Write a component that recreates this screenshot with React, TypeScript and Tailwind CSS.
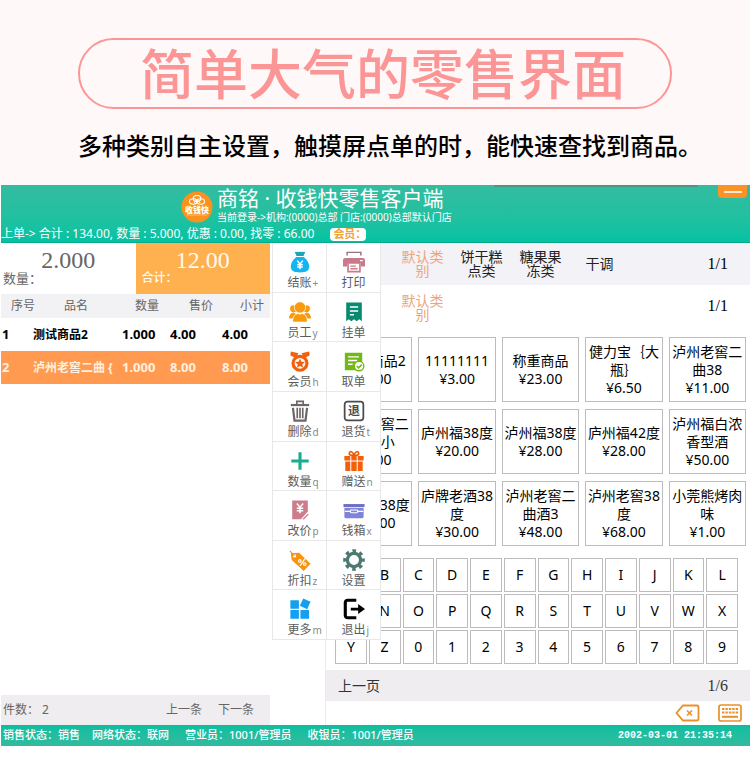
import type { ReactNode } from "react";

const actions: { label: string; hint?: string; icon: ReactNode }[] = [
  {
    label: "结账",
    hint: "+",
    icon: (
      <>
        <path d="M6 0.500q1.700 1.300 3 0q1.500 1.300 3 0q1.500 1.300 3 0q1.300 1.300 3 0L15.800 5.500H8.200z" fill="#19a6b8" />
        <path d="M8 6.500h8c4 3 6 6.500 6 10.500 0 4.500-3 6.500-10 6.500S2 21.500 2 17C2 13 4 9.500 8 6.500z" fill="#12b5f2" />
        <path d="M9 10.500l3 4 3-4M12 14.500V20M9 15h6M9 17.500h6" stroke="#fff" strokeWidth="1.600" fill="none" />
      </>
    ),
  },
  {
    label: "打印",
    icon: (
      <>
        <path d="M4.500 5V1.500h15V5" stroke="#97747f" strokeWidth="1.600" fill="none" />
        <path d="M2.500 7.500h19A2.500 2.500 0 0 1 24 10v7h-4.500v-4h-15v4H0v-7a2.500 2.500 0 0 1 2.500-2.500z" fill="#c9798a" />
        <path d="M5.500 13h13v9.500h-13z" fill="#fff" stroke="#c9798a" strokeWidth="1.800" />
        <path d="M8 16.500h6M8 19.300h8" stroke="#c9798a" strokeWidth="1.500" />
        <path d="M18.500 10.500h3" stroke="#fff" strokeWidth="1.400" />
      </>
    ),
  },
  {
    label: "员工",
    hint: "y",
    icon: (
      <g fill="#f99a0c">
        <circle cx="5" cy="8.500" r="3.800" />
        <circle cx="19" cy="8.500" r="3.800" />
        <path d="M0 19c0-4 2-6 5-6.500l3 2V19zM24 19c0-4-2-6-5-6.500l-3 2V19z" />
        <circle cx="12" cy="7" r="6.200" stroke="#fff" strokeWidth="0.800" />
        <path d="M4 23c0-6 2-8.500 6-9.500l2 1 2-1c4 1 6 3.500 6 9.500z" stroke="#fff" strokeWidth="0.800" />
      </g>
    ),
  },
  {
    label: "挂单",
    icon: (
      <>
        <path d="M3.500 1.500h17v20.500l-2.800-2-2.800 2-2.900-2-2.900 2-2.800-2-2.800 2z" fill="#078a70" />
        <path d="M7.500 6.500h9M7.500 10.800h9M7.500 15h4.500" stroke="#fff" strokeWidth="1.600" />
      </>
    ),
  },
  {
    label: "会员",
    hint: "h",
    icon: (
      <>
        <path d="M2 1.500l8.500 2L7 8.500 1.500 6zM22 1.500l-8.500 2L17 8.500 22.500 6z" fill="#f2600c" />
        <circle cx="12" cy="14.500" r="7.600" fill="#fff" stroke="#f2600c" strokeWidth="3.400" />
        <path d="M12 9.300l1.600 3.500 3.800.4-2.900 2.500.9 3.700-3.400-1.900-3.400 1.900.9-3.700-2.900-2.500 3.800-.4z" fill="#f2600c" />
      </>
    ),
  },
  {
    label: "取单",
    icon: (
      <>
        <path d="M2 3h19v12h-5v7H2z" fill="#74b816" />
        <path d="M5.500 7.500h12M5.500 11.500h10M5.500 15.500h5" stroke="#fff" strokeWidth="1.500" />
        <circle cx="17.500" cy="17.500" r="5.200" fill="#fff" stroke="#74b816" strokeWidth="1.500" />
        <path d="M15 17.500l2 2 3.500-3.500" stroke="#74b816" strokeWidth="1.700" fill="none" />
      </>
    ),
  },
  {
    label: "删除",
    hint: "d",
    icon: (
      <g fill="none" stroke="#6b6468">
        <path d="M2 5.500h20" strokeWidth="2.400" />
        <path d="M8.500 4.500V1.500h7v3" strokeWidth="1.800" />
        <path d="M4.300 8.500L6 22.500h12l1.700-14" strokeWidth="2.400" />
        <path d="M9 8.500V20M12 8.500V20M15 8.500V20" strokeWidth="1.800" />
      </g>
    ),
  },
  {
    label: "退货",
    hint: "t",
    icon: (
      <>
        <rect x="1.800" y="1.800" width="20.400" height="20.400" rx="3" fill="none" stroke="#4d4a4d" strokeWidth="1.900" />
        <text x="12" y="16.500" textAnchor="middle" fontSize="13" fontWeight="700" fill="#4d4a4d">
          退
        </text>
      </>
    ),
  },
  {
    label: "数量",
    hint: "q",
    icon: <path d="M12 2.500v19M2.500 12h19" stroke="#18ad91" strokeWidth="3.400" />,
  },
  {
    label: "赠送",
    hint: "n",
    icon: (
      <>
        <path d="M12 6C9 6 6 5.500 7 3s4-1 5 3c1-4 4-5.500 5-3s-2 3-5 3z" fill="none" stroke="#e8590c" strokeWidth="1.700" />
        <path d="M1.500 6.500h21v5h-21zM2.500 12.500h19V23h-19z" fill="#f2600c" />
        <path d="M8.500 6.500V23M15.500 6.500V23" stroke="#fff" strokeWidth="1.100" />
      </>
    ),
  },
  {
    label: "改价",
    hint: "p",
    icon: (
      <>
        <path d="M3.500 1.500h17v12L13 22H3.500z" fill="#cd7c8c" />
        <path d="M8.500 5l3.500 4 3.500-4M12 9v6.500M8.500 10h7M8.500 12.800h7" stroke="#fff" strokeWidth="1.600" fill="none" />
        <path d="M21 16.500L15.500 22" stroke="#cd7c8c" strokeWidth="1.500" />
      </>
    ),
  },
  {
    label: "钱箱",
    hint: "x",
    icon: (
      <>
        <path d="M0.500 5.500h23v3.200h-23z" fill="#6d70c4" />
        <path d="M1.500 9.500h21V19a2 2 0 0 1-2 2h-17a2 2 0 0 1-2-2z" fill="#8084d6" />
        <path d="M2 13.500h6M16 13.500h6" stroke="#fff" strokeWidth="1.200" />
        <rect x="8" y="12" width="8" height="3" rx="1" fill="none" stroke="#fff" strokeWidth="1.200" />
      </>
    ),
  },
  {
    label: "折扣",
    hint: "z",
    icon: (
      <>
        <path d="M2 4.500L11 4l12.500 12-7.500 8L3 12z" fill="#f9920c" />
        <circle cx="6" cy="7.500" r="1.800" fill="#fff" />
        <path d="M6 7.500L1 2" stroke="#f9920c" strokeWidth="1.100" />
        <path d="M12 18.500l5.500-8" stroke="#fff" strokeWidth="1.300" />
        <circle cx="11.800" cy="13" r="1.400" fill="none" stroke="#fff" strokeWidth="1.200" />
        <circle cx="17.200" cy="16.500" r="1.400" fill="none" stroke="#fff" strokeWidth="1.200" />
      </>
    ),
  },
  {
    label: "设置",
    icon: (
      <g stroke="#4a7a72" fill="none">
        <circle cx="12" cy="12" r="7.200" strokeWidth="3.600" />
        <circle cx="12" cy="12" r="10" strokeWidth="3.600" strokeDasharray="3.930 3.924" strokeDashoffset="2" />
      </g>
    ),
  },
  {
    label: "更多",
    hint: "m",
    icon: (
      <g fill="#159ff0">
        <path d="M1.500 2.500h9.300v9.300H1.500zM1.500 13.200h9.300v9.300H1.500zM12.500 13.200h9.300v9.300h-9.300z" />
        <path d="M15.500 0.500l8 3.700-3.700 8-8-3.700z" />
      </g>
    ),
  },
  {
    label: "退出",
    hint: "j",
    icon: (
      <>
        <path d="M14.500 2.500H5A2.500 2.500 0 0 0 2.500 5v14A2.500 2.500 0 0 0 5 21.500h9.500" fill="none" stroke="#000" strokeWidth="3.400" />
        <path d="M8.500 10.500h8V6.500L24 12l-7.500 5.500v-4h-8z" fill="#000" />
      </>
    ),
  },
];

const products = [
  { name: "测试商品2", price: "¥4.00" },
  { name: "11111111", price: "¥3.00" },
  { name: "称重商品", price: "¥23.00" },
  { name: "健力宝｛大瓶｝", price: "¥6.50" },
  { name: "泸州老窖二曲38", price: "¥11.00" },
  { name: "泸州老窖二曲酒小", price: "¥8.00" },
  { name: "庐州福38度", price: "¥20.00" },
  { name: "泸州福38度", price: "¥28.00" },
  { name: "庐州福42度", price: "¥28.00" },
  { name: "泸州福白浓香型酒", price: "¥50.00" },
  { name: "泸州福38度", price: "¥20.00" },
  { name: "庐牌老酒38度", price: "¥30.00" },
  { name: "泸州老窖二曲酒3", price: "¥48.00" },
  { name: "泸州老窖38度", price: "¥68.00" },
  { name: "小莞熊烤肉味", price: "¥1.00" },
];

const rows = [
  { no: 1, name: "测试商品2", qty: "1.000", price: "4.00", total: "4.00" },
  { no: 2, name: "泸州老窖二曲 {", qty: "1.000", price: "8.00", total: "8.00" },
];

const categories = ["默认类别", "饼干糕点类", "糖果果冻类", "干调"];
const keys = "ABCDEFGHIJKLMNOPQRSTUVWXYZ0123456789".split("");

function Banner() {
  return (
    <section className="bg-[#fff8f8] px-[78px] pt-[38px] pb-[23px] text-center">
      <h1 className="flex h-[71px] items-center justify-center rounded-full border-2 border-[#fc9696] pl-4 text-[54px] leading-none font-medium whitespace-nowrap text-[#fc9696]">
        简单大气的零售界面
      </h1>
      <p className="mt-[21px] text-left text-2xl font-medium whitespace-nowrap text-black">
        多种类别自主设置，触摸屏点单的时，能快速查找到商品。
      </p>
    </section>
  );
}

function Logo() {
  return (
    <svg viewBox="0 0 32 32" className="size-8 shrink-0">
      <circle cx="16" cy="16" r="15.500" fill="#fb9220" />
      <g fill="none" stroke="#fff" strokeWidth="1.100">
        <ellipse cx="16" cy="7.500" rx="3.800" ry="3" />
        <ellipse cx="12.300" cy="10.500" rx="3.800" ry="2.700" />
        <ellipse cx="19.700" cy="10.500" rx="3.800" ry="2.700" />
        <path d="M13 12l3-3.500 3 3.500" />
      </g>
      <text x="16" y="21.500" textAnchor="middle" fontSize="8" fontWeight="900" fill="#fff">
        收钱快
      </text>
      <path d="M6 24h20" stroke="#fdc98c" strokeWidth="0.800" />
    </svg>
  );
}

function Header() {
  return (
    <header className="flex h-[58px] flex-col justify-between border-b border-[#0aa98c] bg-linear-to-b from-[#33bca0] to-[#00c3a2] text-white">
      <div className="flex items-start justify-between pr-[3px] pl-[180px]">
        <div className="flex gap-1">
          <div className="pt-1.5">
            <Logo />
          </div>
          <div className="whitespace-nowrap">
            <h2 className="text-[21px] leading-[26px]">商铭 · 收钱快零售客户端</h2>
            <p className="text-[10px] leading-3">当前登录-&gt;机构:(0000)总部 门店:(0000)总部默认门店</p>
          </div>
        </div>
        <div className="flex items-start gap-5">
          <div className="h-0.5 w-[204px] bg-[#4f9482]" />
          <button aria-label="最小化" className="flex h-[13px] w-[29px] items-center justify-center rounded-b bg-[#fb9228]">
            <span className="h-0.5 w-[18px] bg-[#ffe9cf]" />
          </button>
        </div>
      </div>
      <div className="flex h-4 items-center gap-4 text-xs leading-4 whitespace-nowrap">
        <p>上单-&gt; 合计 : 134.00, 数量 : 5.000, 优惠 : 0.00, 找零 : 66.00</p>
        <span className="flex h-[13px] w-9 items-center overflow-hidden rounded-sm bg-white pl-[3px] text-[11px] font-bold text-[#f0a33c]">
          会员：
        </span>
      </div>
    </header>
  );
}

function Cart() {
  return (
    <section className="flex w-[269px] shrink-0 flex-col bg-white">
      <div className="grid h-[51px] grid-cols-2">
        <div className="text-[#666]">
          <p className="pt-1 text-center font-[Liberation_Serif,serif] text-2xl leading-[26px]">2.000</p>
          <p className="pl-0.5 text-[13px] leading-[10px]">数量：</p>
        </div>
        <div className="bg-[#ffb04f] text-[#fffaf0]">
          <p className="pt-1 text-center font-[Liberation_Serif,serif] text-2xl leading-[26px]">12.00</p>
          <p className="pl-1.5 text-xs leading-[10px] font-medium">合计：</p>
        </div>
      </div>
      <table className="w-full table-fixed text-left whitespace-nowrap">
        <colgroup>
          <col className="w-8" />
          <col className="w-[89px]" />
          <col className="w-12" />
          <col className="w-[52px]" />
          <col />
        </colgroup>
        <thead>
          <tr className="h-6 bg-[#f2f2f5] text-xs text-[#666]">
            <th className="pl-2.5 font-normal">序号</th>
            <th className="pl-[31px] font-normal">品名</th>
            <th className="pl-[13px] font-normal">数量</th>
            <th className="pl-[19px] font-normal">售价</th>
            <th className="pl-[18px] font-normal">小计</th>
          </tr>
        </thead>
        <tbody>
          {rows.map((row) => (
            <tr
              key={row.no}
              className="h-[33px] text-[13px] font-bold text-black even:bg-[#ff9a50] even:text-[#fff0df]"
            >
              <td className="pl-px">{row.no}</td>
              <td className="text-xs">{row.name}</td>
              <td>{row.qty}</td>
              <td>{row.price}</td>
              <td>{row.total}</td>
            </tr>
          ))}
        </tbody>
      </table>
      <div className="mt-auto flex h-[30px] items-center bg-[#efedf0] pr-4 pl-0.5 text-xs text-[#666]">
        <span className="mr-auto">件数： 2</span>
        <button className="mr-4">上一条</button>
        <button>下一条</button>
      </div>
    </section>
  );
}

function ActionMenu() {
  return (
    <nav className="absolute top-0 left-0.5 grid h-[397px] w-[109px] grid-cols-2 grid-rows-8 border-l border-[#e8e8e8] bg-white">
      {actions.map((action) => (
        <button key={action.label} className="flex flex-col items-center border-r border-b border-[#e8e8e8] pt-2">
          <svg viewBox="0 0 24 24" className="size-[22px] shrink-0">
            {action.icon}
          </svg>
          <span className="mt-0.5 flex items-baseline pl-2 text-xs leading-4 text-[#5c5c5c]">
            {action.label}
            <span className="w-2 pl-px text-left text-[10px] text-[#888]">{action.hint}</span>
          </span>
        </button>
      ))}
    </nav>
  );
}

function Catalog() {
  return (
    <section className="flex min-w-0 flex-1 flex-col bg-white text-black">
      <div className="flex h-[42px] items-center bg-[#f3f2f6] pr-[22px] pl-[67px] text-sm leading-[14px]">
        {categories.map((category) => (
          <button key={category} className="w-[59px] px-2 text-[#222] first:text-[#eda47e]">
            {category}
          </button>
        ))}
        <span className="ml-auto font-[Liberation_Serif,serif] text-base">1/1</span>
      </div>
      <div className="flex h-[52px] items-start pt-[9px] pr-[22px] pl-[67px] text-sm leading-[14px]">
        <button className="w-[59px] px-2 text-[#eda47e]">默认类别</button>
        <span className="ml-auto font-[Liberation_Serif,serif] text-base">1/1</span>
      </div>
      <div className="grid grid-cols-5 gap-x-1.5 gap-y-[7px] pr-1 pl-[9px]">
        {products.map((product, i) => (
          <button
            key={i}
            className="flex h-[65px] flex-col items-center justify-center border border-[#bdbbbd] text-sm leading-[18px]"
          >
            <span>{product.name}</span>
            <span>{product.price}</span>
          </button>
        ))}
      </div>
      <div className="mt-3 grid grid-cols-12 gap-0.5 pr-3 pl-[9px]">
        {keys.map((key) => (
          <button key={key} className="h-[34px] border border-[#bdbbbd] text-sm">
            {key}
          </button>
        ))}
      </div>
      <div className="mt-1.5 flex h-[31px] items-center justify-between bg-[#efedf0] pr-[22px] pl-3 text-sm text-[#333]">
        <button>上一页</button>
        <span className="font-[Liberation_Serif,serif] text-base">1/6</span>
      </div>
      <div className="flex h-6 items-center justify-end gap-[18px] pr-2">
        <button aria-label="退格">
          <svg viewBox="0 0 25 18" className="h-[18px] w-[25px]" fill="none" stroke="#e8912a">
            <path d="M8 1.500h14a1.500 1.500 0 0 1 1.500 1.500v12a1.500 1.500 0 0 1-1.500 1.500H8L1.500 9z" strokeWidth="1.800" />
            <path d="M12 6.500l5 5M17 6.500l-5 5" strokeWidth="1.600" />
          </svg>
        </button>
        <button aria-label="键盘">
          <svg viewBox="0 0 24 18" className="h-[18px] w-6" fill="none" stroke="#e8912a">
            <rect x="1" y="1" width="22" height="16" rx="2" strokeWidth="1.700" />
            <path d="M4 5h16M4 8.500h16" strokeWidth="2" strokeDasharray="2.400 1" />
            <path d="M4 12.800h16" strokeWidth="2" />
          </svg>
        </button>
      </div>
    </section>
  );
}

export default function App() {
  return (
    <main className="min-h-screen bg-white font-[Noto_Sans,Noto_Sans_CJK_SC,sans-serif]">
      <Banner />
      <div className="pl-px">
        <Header />
        <div className="flex">
          <Cart />
          <div className="relative w-14 shrink-0 border-r border-[#ececec]">
            <ActionMenu />
          </div>
          <Catalog />
        </div>
        <footer className="flex h-[21px] items-center bg-linear-to-b from-[#08bf9f] to-[#30bba0] pr-[18px] pl-0.5 text-[11px] font-medium whitespace-nowrap text-white">
          <span className="mr-3">销售状态：销售</span>
          <span className="mr-4">网络状态：联网</span>
          <span className="mr-4">营业员：1001/管理员</span>
          <span className="mr-auto">收银员：1001/管理员</span>
          <time className="font-[Liberation_Mono,monospace] text-[10px] font-bold">2002-03-01 21:35:14</time>
        </footer>
      </div>
    </main>
  );
}
